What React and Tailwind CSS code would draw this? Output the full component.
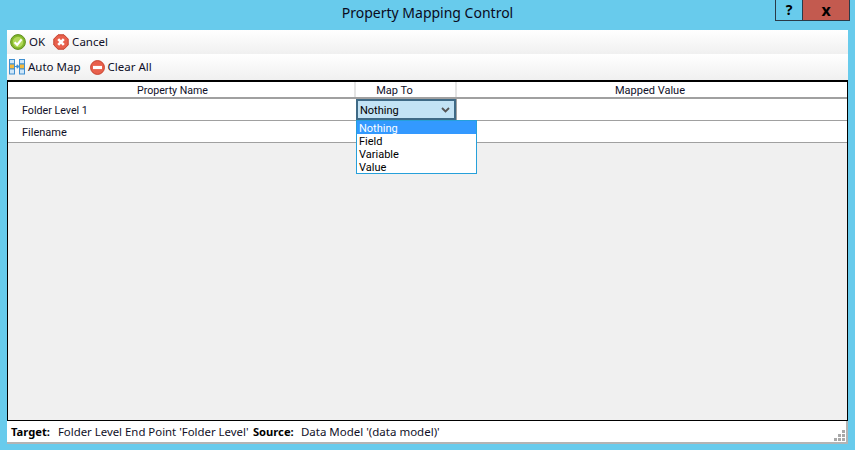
import { useState } from "react";

const OkIcon = () => (
  <svg width="16" height="16" viewBox="0 0 16 16">
    <circle cx="8" cy="8" r="7.4" fill="#84b82c" stroke="#5f8f1e" />
    <circle cx="8" cy="8" r="5.2" fill="#b2d95a" />
    <path d="M4.6 8.2 7.2 10.8 11.6 5.4" fill="none" stroke="#fff" strokeWidth="2.2" />
  </svg>
);

const CancelIcon = () => (
  <svg width="16" height="16" viewBox="0 0 16 16">
    <path d="M5 .8h6L15.2 5v6L11 15.2H5L.8 11V5z" fill="#e8604c" stroke="#c4402c" />
    <path d="M5.2 5.2 10.8 10.8M10.8 5.2 5.2 10.8" stroke="#fff" strokeWidth="2.6" />
  </svg>
);

const ClearIcon = () => (
  <svg width="15" height="15" viewBox="0 0 16 16">
    <circle cx="8" cy="8" r="7.4" fill="#e8604c" stroke="#c4402c" />
    <rect x="3.2" y="6.3" width="9.6" height="3.4" fill="#fff" />
  </svg>
);

const AutoMapIcon = () => (
  <svg width="16" height="16" viewBox="0 0 16 16">
    <rect x="0.5" y="0.5" width="5" height="4.5" fill="#cfe6f8" stroke="#3f8fd0" />
    <rect x="0.5" y="5" width="5" height="5" fill="#f5b93e" stroke="#3f8fd0" />
    <rect x="0.5" y="10" width="5" height="5" fill="#cfe6f8" stroke="#3f8fd0" />
    <rect x="10.5" y="0.5" width="5" height="4.5" fill="#cfe6f8" stroke="#3f8fd0" />
    <rect x="10.5" y="5" width="5" height="5" fill="#f5b93e" stroke="#3f8fd0" />
    <rect x="10.5" y="10" width="5" height="5" fill="#cfe6f8" stroke="#3f8fd0" />
    <path d="M6 7.5h2.5M8 5.8l2 1.7-2 1.7z" fill="#3f8fd0" stroke="#3f8fd0" />
  </svg>
);

const ToolButton = ({ icon, label }) => (
  <div className="flex items-center gap-[3px]">
    {icon}
    <span>{label}</span>
  </div>
);

const Grip = () => (
  <div className="grid grid-cols-3 gap-[1px] w-[11px] h-[11px] mr-[1px] mb-[1px] self-end">
    <span />
    <span />
    <span className="bg-[#a8a8a8]" />
    <span />
    <span className="bg-[#a8a8a8]" />
    <span className="bg-[#a8a8a8]" />
    <span className="bg-[#a8a8a8]" />
    <span className="bg-[#a8a8a8]" />
    <span className="bg-[#a8a8a8]" />
  </div>
);

const mapOptions = ["Nothing", "Field", "Variable", "Value"];

export default function App() {
  const [selected] = useState("Nothing");

  return (
    <div className="font-['Noto_Sans',sans-serif] w-[855px] h-[450px] bg-[#68cbec] flex flex-col text-[11.5px] leading-none text-[#101028] overflow-hidden">
      {/* title bar */}
      <div className="h-[30px] shrink-0 flex relative">
        <div className="flex-1 text-center text-[14px] text-[#0a0a20] pt-[6px]">Property Mapping Control</div>
        <div className="absolute right-[5px] top-0 flex h-[21px] border border-t-0 border-[#2a3a48]">
          <div className="w-[27px] flex items-center justify-center font-bold text-[14px] text-black border-r border-[#2a3a48]">?</div>
          <div className="w-[46px] bg-[#c35a4f] flex items-center justify-center font-bold text-[16px] leading-[18px] text-black">x</div>
        </div>
      </div>

      {/* window body */}
      <div className="flex-1 ml-[7px] mr-[7px] mb-[6px] flex flex-col bg-white">
        <div className="h-[24px] shrink-0 flex items-center gap-[8px] pl-[3px] bg-gradient-to-b from-white to-[#f0f0f0]">
          <ToolButton icon={<OkIcon />} label="OK" />
          <ToolButton icon={<CancelIcon />} label="Cancel" />
        </div>
        <div className="h-[26px] shrink-0 flex items-center gap-[9px] pl-[2px] bg-gradient-to-b from-white to-[#f0f0f0]">
          <ToolButton icon={<AutoMapIcon />} label="Auto Map" />
          <ToolButton icon={<ClearIcon />} label="Clear All" />
        </div>

        {/* grid */}
        <div className="h-[341px] shrink-0 border border-black border-t-2 bg-[#f0f0f0] relative font-['Roboto',sans-serif] text-[11px]">
          <div className="h-[17px] flex bg-white border-b-2 border-[#a0a0a0] text-center">
            <div className="w-[348px] border-r-2 border-[#e4e4e4] pr-[17px] pt-[1px] leading-[16px] text-[10.6px]">Property Name</div>
            <div className="w-[101px] border-r-2 border-[#e4e4e4] pr-[22px] pt-[1px] leading-[16px]">Map To</div>
            <div className="flex-1 pr-[4px] pt-[1px] leading-[16px]">Mapped Value</div>
          </div>
          <div className="h-[22px] flex bg-white border-b border-[#a0a0a0]">
            <div className="w-[348px] pl-[14px] pt-[1px] leading-[21px] text-[10.7px]">Folder Level 1</div>
            <div className="w-[100px] h-[21px] bg-[#c3e3f5] border-2 border-[#3f6a86] flex items-center justify-between pl-[2px] pr-[4px] pt-[1px] text-black">
              <span>Nothing</span>
              <svg width="9" height="6" viewBox="0 0 9 6">
                <path d="M1 1l3.5 3.5L8 1" fill="none" stroke="#555" strokeWidth="1.8" />
              </svg>
            </div>
            <div className="flex-1 border-l border-[#a0a0a0]" />
          </div>
          <div className="h-[22px] flex bg-white border-b border-[#a0a0a0]">
            <div className="pl-[14px] pt-[1px] leading-[21px]">Filename</div>
          </div>

          {/* open combo list */}
          <div className="absolute left-[348px] top-[38px] w-[121px] h-[54px] bg-white border border-[#26a0da] text-black">
            {mapOptions.map((opt) => (
              <div
                key={opt}
                className={opt === selected ? "h-[13px] pt-[1px] leading-[13px] pl-[2px] bg-[#3399ff] text-white" : "h-[13px] pt-[1px] leading-[13px] pl-[2px]"}
              >
                {opt}
              </div>
            ))}
          </div>
        </div>

        {/* status bar */}
        <div className="flex-1 flex items-center justify-between border-b-2 border-r-2 border-[#b4b4b4] pl-[4px]">
          <div className="flex items-center whitespace-pre pt-[1px]">
            <span className="font-bold text-black text-[11.2px]">Target:</span>
            <span className="w-[203px] pl-[8px] text-[11.4px]">Folder Level End Point 'Folder Level'</span>
            <span className="font-bold text-black text-[11.2px] w-[48px]">Source:</span>
            <span>Data Model '(data model)'</span>
          </div>
          <Grip />
        </div>
      </div>
    </div>
  );
}
